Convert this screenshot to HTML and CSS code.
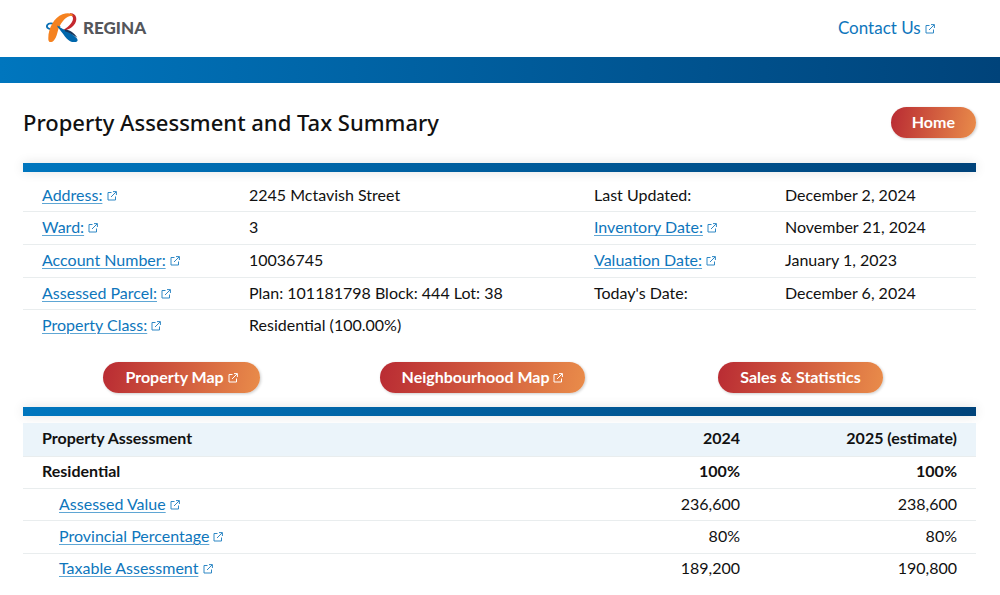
FILE: index.html
```html
<!DOCTYPE html>
<html lang="en">
<head>
<meta charset="utf-8">
<meta name="viewport" content="width=device-width, initial-scale=1">
<title>Property Assessment and Tax Summary</title>
<link rel="stylesheet" href="styles.css">
</head>
<body>
<svg class="sprite" aria-hidden="true">
  <symbol id="external" viewBox="0 0 10 10">
    <path d="M4.500 1.500H1V9H8.500V5.500M6 .6H9.400V4M9.200 .8L4 6" fill="none" stroke="currentColor" stroke-width="1"/>
  </symbol>
</svg>
<header class="site-header">
  <div class="logo">
    <svg class="logo-mark" viewBox="0 0 33 30" aria-hidden="true">
      <path d="M14 14C10 10.500 3 9 1.300 12S4 17 8 16.500" fill="none" stroke="#0b70b5" stroke-width="1.800"/>
      <path d="M24 .3C31 0 32 7.500 28 12C25 15.500 20 17.800 14.500 18C21 15.500 27 10 27 5.500C27 3.500 26 2.500 23 2.600Z" fill="#c4282e"/>
      <path d="M2.400 27C1.500 17 7.500 4.500 16.500 1.200C21 -.4 26 -.2 27.500 2.800C20.500 2 16 8 12.500 15.500C11 21.500 9.500 28 5.500 29C3.500 29.400 2.600 28.500 2.400 27Z" fill="#f58220"/>
      <path d="M11.500 12.500C18 17.500 25 18.500 31 25.500C33 28.500 30 29.500 26 29C21 28 17 20 11.500 14Z" fill="#0067ac"/>
      <path d="M19 16.500C24 17 28.500 20 31.300 24.800C27 21.500 24 20 19 18.200Z" fill="#17365b"/>
    </svg>
    <span class="logo-name">REGINA</span>
  </div>
  <a class="contact" href="#">Contact Us <svg class="ext"><use href="#external"/></svg></a>
</header>
<div class="banner"></div>
<main class="page">
  <div class="title-row">
    <h1>Property Assessment and Tax Summary</h1>
    <button class="pill" type="button">Home</button>
  </div>
  <div class="rule"></div>
  <table class="grid details">
    <colgroup><col class="c-label"><col class="c-value"><col class="c-date-label"><col></colgroup>
    <tbody>
      <tr><td><a href="#">Address:</a> <svg class="ext"><use href="#external"/></svg></td><td>2245 Mctavish Street</td><td>Last Updated:</td><td>December 2, 2024</td></tr>
      <tr><td><a href="#">Ward:</a> <svg class="ext"><use href="#external"/></svg></td><td>3</td><td><a href="#">Inventory Date:</a> <svg class="ext"><use href="#external"/></svg></td><td>November 21, 2024</td></tr>
      <tr><td><a href="#">Account Number:</a> <svg class="ext"><use href="#external"/></svg></td><td>10036745</td><td><a href="#">Valuation Date:</a> <svg class="ext"><use href="#external"/></svg></td><td>January 1, 2023</td></tr>
      <tr><td><a href="#">Assessed Parcel:</a> <svg class="ext"><use href="#external"/></svg></td><td>Plan: 101181798 Block: 444 Lot: 38</td><td>Today's Date:</td><td>December 6, 2024</td></tr>
      <tr><td><a href="#">Property Class:</a> <svg class="ext"><use href="#external"/></svg></td><td>Residential (100.00%)</td><td></td><td></td></tr>
    </tbody>
  </table>
  <div class="actions">
    <button class="pill" type="button">Property Map <svg class="ext"><use href="#external"/></svg></button>
    <button class="pill" type="button">Neighbourhood Map <svg class="ext"><use href="#external"/></svg></button>
    <button class="pill" type="button">Sales &amp; Statistics</button>
  </div>
  <div class="rule"></div>
  <table class="grid assessment">
    <colgroup><col><col class="c-year"><col class="c-estimate"></colgroup>
    <thead>
      <tr><th scope="col">Property Assessment</th><th scope="col">2024</th><th scope="col">2025 (estimate)</th></tr>
    </thead>
    <tbody>
      <tr class="group"><th scope="row">Residential</th><td>100%</td><td>100%</td></tr>
      <tr class="item"><td><a href="#">Assessed Value</a> <svg class="ext"><use href="#external"/></svg></td><td>236,600</td><td>238,600</td></tr>
      <tr class="item"><td><a href="#">Provincial Percentage</a> <svg class="ext"><use href="#external"/></svg></td><td>80%</td><td>80%</td></tr>
      <tr class="item"><td><a href="#">Taxable Assessment</a> <svg class="ext"><use href="#external"/></svg></td><td>189,200</td><td>190,800</td></tr>
    </tbody>
  </table>
</main>
</body>
</html>
```
FILE: styles.css
```css
* { box-sizing: border-box; }
body {
  margin: 0;
  background: #fff;
  color: #111;
  font: 16px/20px Lato, sans-serif;
}
a {
  color: #0e76bc;
  text-decoration-color: #5fa6d4;
  text-decoration-thickness: 1px;
  text-underline-offset: 2px;
}
.sprite { position: absolute; width: 0; height: 0; }
.ext { width: 10px; height: 10px; color: #2f88c5; }

.site-header {
  display: flex;
  align-items: center;
  justify-content: space-between;
  height: 57px;
  padding: 0 65px 2px 46px;
}
.logo { display: flex; align-items: center; gap: 4px; }
.logo-mark { width: 33px; height: 30px; }
.logo-name { color: #54565b; font: 900 17px/20px Lato, sans-serif; }
.contact { font-size: 17px; text-decoration: none; }

.banner { height: 26px; background: linear-gradient(90deg, #0076be, #00437a); }
.page { padding: 0 24px 0 23px; }
.title-row {
  display: flex;
  align-items: center;
  justify-content: space-between;
  height: 80px;
  padding-bottom: 2px;
}
h1 { margin: 0; font: 500 22px/32px "Noto Sans", sans-serif; }
.rule {
  height: 9px;
  background: linear-gradient(90deg, #0076be, #00437a);
  box-shadow: 0 0 12px rgba(0, 0, 0, .12);
}
.pill {
  height: 31px;
  padding: 0 21px 1px;
  border: 0;
  border-radius: 16px;
  background: linear-gradient(100deg, #b92b33, #e98c4a);
  box-shadow: 1px 1px 3px rgba(0, 0, 0, .2);
  color: #fff;
  font: bold 16px/20px Lato, sans-serif;
}
.pill .ext { color: #fff; }
.actions .pill { padding: 0 22px; }

.grid { width: 100%; height: 162px; border-collapse: collapse; table-layout: fixed; }
.grid td, .grid th { padding: 0 19px 2px; text-align: left; white-space: nowrap; }
.grid tr { border-bottom: 1px solid #e9edee; }
.grid tbody tr:last-child { border-bottom: 0; }
.details { margin-top: 8px; }
.c-label { width: 207px; }
.c-value { width: 345px; }
.c-date-label { width: 191px; }
.actions {
  display: grid;
  grid-template-columns: 317fr 285fr 351fr;
  justify-items: center;
  align-items: center;
  height: 65px;
  padding-bottom: 7px;
  padding-top: 12px;
}
.assessment { margin-top: 7px; }
.assessment thead { background: #ebf4fa; }
.assessment thead tr { height: 33px; }
.assessment .group { font-weight: bold; }
.assessment .item td:first-child { padding-left: 36px; }
.assessment td:not(:first-child), .assessment th:not(:first-child) { text-align: right; }
.c-year { width: 200px; }
.c-estimate { width: 217px; }
```
